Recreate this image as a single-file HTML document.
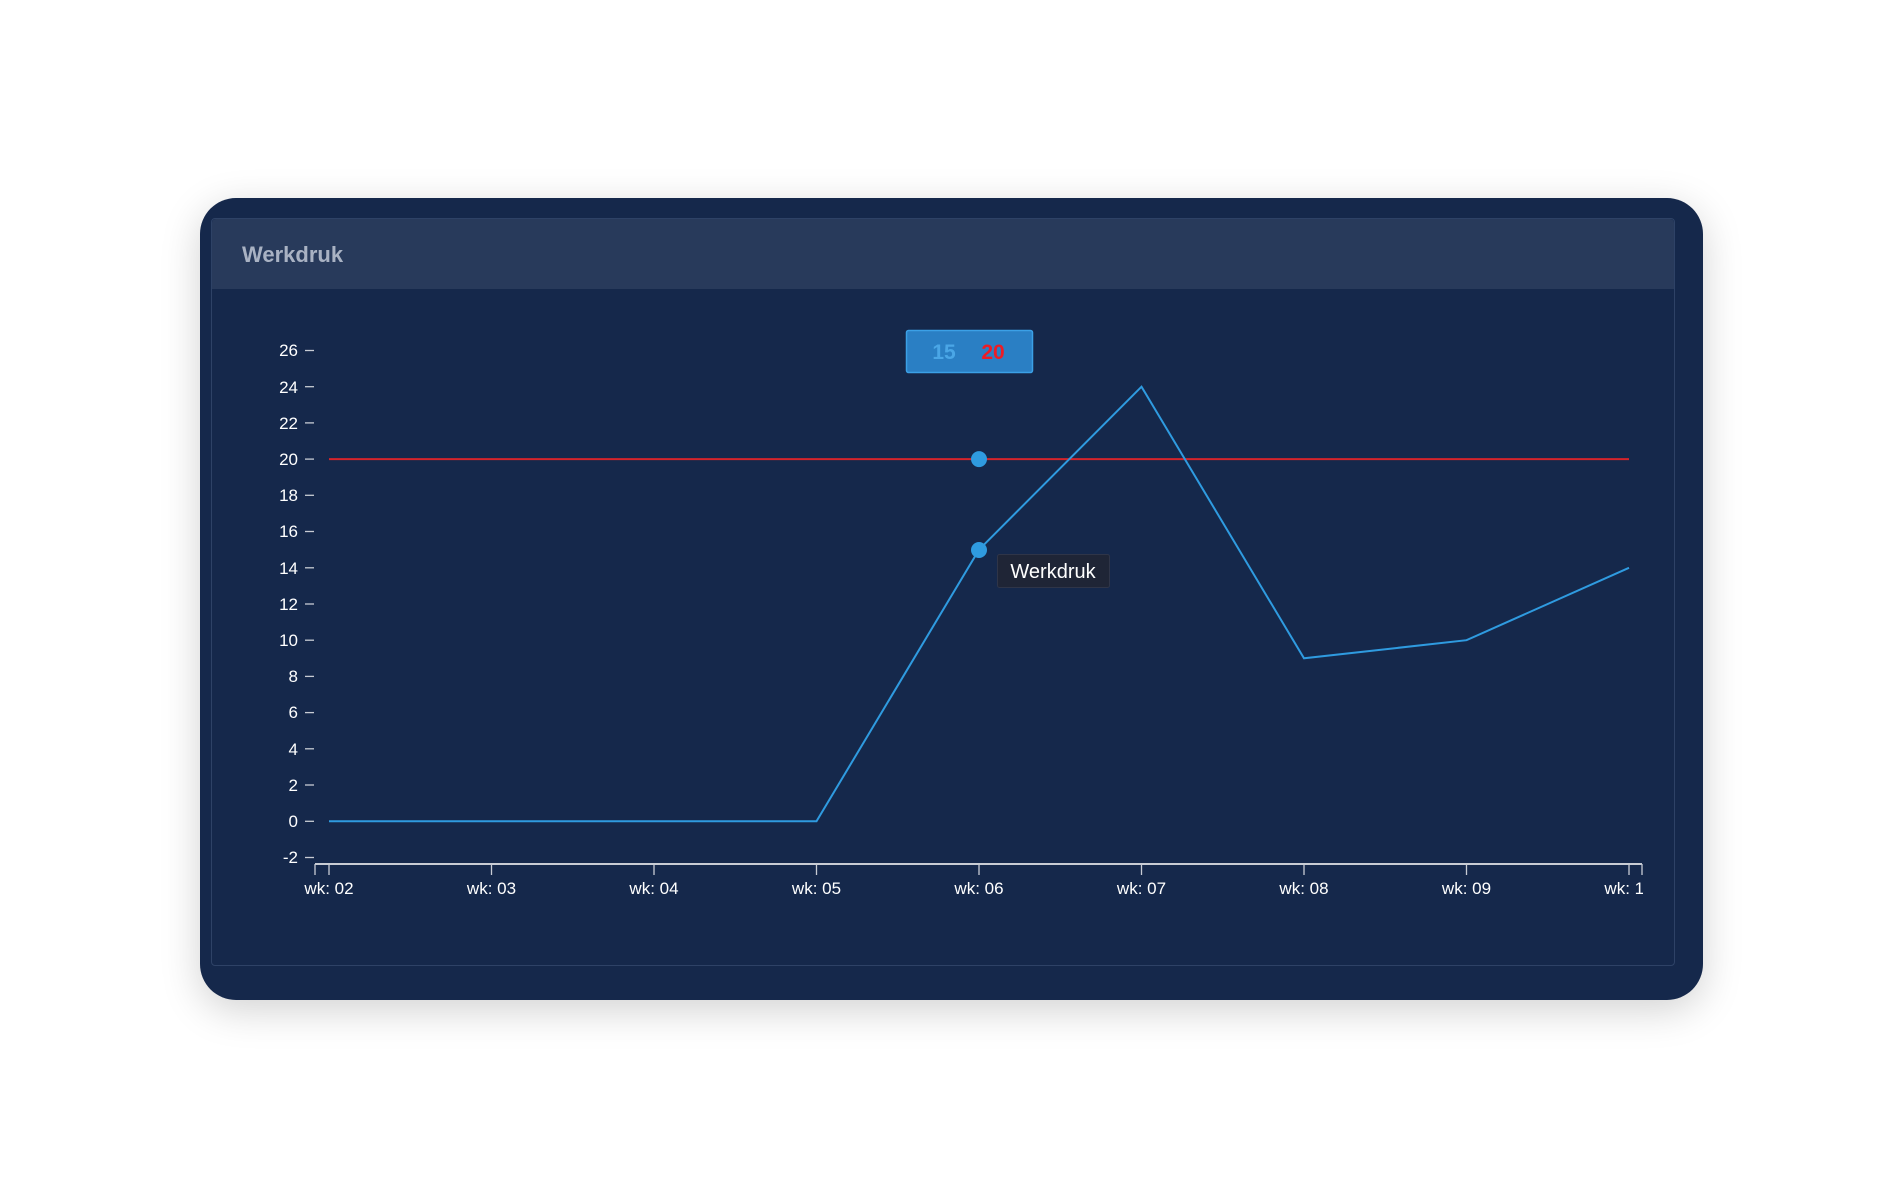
<!DOCTYPE html>
<html><head><meta charset="utf-8"><style>
html,body{margin:0;padding:0;background:#fff;width:1900px;height:1200px;overflow:hidden;font-family:"Liberation Sans",sans-serif}
.card{position:absolute;left:200px;top:198px;width:1503px;height:802px;background:#15284b;border-radius:36px;box-shadow:0 10px 40px rgba(0,0,0,0.18)}
.panel{position:absolute;left:211px;top:218px;width:1462px;height:746px;border:1px solid #2e4266;border-radius:4px}
.head{position:absolute;left:212px;top:219px;width:1462px;height:70px;background:#283a5b;border-radius:4px 4px 0 0}
.title{position:absolute;left:242px;top:242px;font-size:22px;color:#a9b2c3;font-weight:bold}
svg{position:absolute;left:0;top:0}
</style></head><body>
<div class="card"></div>
<div class="panel"></div>
<div class="head"></div>
<div class="title">Werkdruk</div>
<svg width="1900" height="1200" font-family="Liberation Sans, sans-serif">
<defs><clipPath id="c"><rect x="0" y="0" width="1643" height="1200"/></clipPath></defs>
<g fill="#fff" font-size="17" text-anchor="end">
<text x="298" y="356">26</text><text x="298" y="393">24</text><text x="298" y="429">22</text><text x="298" y="465">20</text><text x="298" y="501">18</text><text x="298" y="537">16</text><text x="298" y="574">14</text><text x="298" y="610">12</text><text x="298" y="646">10</text><text x="298" y="682">8</text><text x="298" y="718">6</text><text x="298" y="755">4</text><text x="298" y="791">2</text><text x="298" y="827">0</text><text x="298" y="863">-2</text>
</g>
<g stroke="#c8ccd4" stroke-width="1.3">
<line x1="305" y1="350.5" x2="314" y2="350.5"/><line x1="305" y1="386.7" x2="314" y2="386.7"/><line x1="305" y1="422.9" x2="314" y2="422.9"/><line x1="305" y1="459.1" x2="314" y2="459.1"/><line x1="305" y1="495.3" x2="314" y2="495.3"/><line x1="305" y1="531.5" x2="314" y2="531.5"/><line x1="305" y1="567.8" x2="314" y2="567.8"/><line x1="305" y1="604" x2="314" y2="604"/><line x1="305" y1="640.2" x2="314" y2="640.2"/><line x1="305" y1="676.4" x2="314" y2="676.4"/><line x1="305" y1="712.6" x2="314" y2="712.6"/><line x1="305" y1="748.8" x2="314" y2="748.8"/><line x1="305" y1="785" x2="314" y2="785"/><line x1="305" y1="821.3" x2="314" y2="821.3"/><line x1="305" y1="857.5" x2="314" y2="857.5"/>
<line x1="315" y1="864" x2="1642" y2="864" stroke-width="2"/>
<line x1="315" y1="864" x2="315" y2="875"/><line x1="1642" y1="864" x2="1642" y2="875"/>
<line x1="329" y1="864" x2="329" y2="875"/><line x1="491.5" y1="864" x2="491.5" y2="875"/><line x1="654" y1="864" x2="654" y2="875"/><line x1="816.5" y1="864" x2="816.5" y2="875"/><line x1="979" y1="864" x2="979" y2="875"/><line x1="1141.5" y1="864" x2="1141.5" y2="875"/><line x1="1304" y1="864" x2="1304" y2="875"/><line x1="1466.5" y1="864" x2="1466.5" y2="875"/><line x1="1629" y1="864" x2="1629" y2="875"/>
</g>
<g fill="#fff" font-size="17" text-anchor="middle" clip-path="url(#c)">
<text x="329" y="894">wk: 02</text><text x="491.5" y="894">wk: 03</text><text x="654" y="894">wk: 04</text><text x="816.5" y="894">wk: 05</text><text x="979" y="894">wk: 06</text><text x="1141.5" y="894">wk: 07</text><text x="1304" y="894">wk: 08</text><text x="1466.5" y="894">wk: 09</text><text x="1629" y="894">wk: 10</text>
</g>
<line x1="329" y1="459.1" x2="1629" y2="459.1" stroke="#d5242b" stroke-width="2"/>
<polyline points="329,821.3 491.5,821.3 654,821.3 816.5,821.3 979,549.7 1141.5,386.7 1304,658.3 1466.5,640.2 1629,567.8" fill="none" stroke="#2f9be0" stroke-width="2"/>
<circle cx="979" cy="459.1" r="8" fill="#2f9be0"/>
<circle cx="979" cy="550" r="8" fill="#2f9be0"/>
<rect x="906.5" y="330.5" width="126" height="42" rx="2" fill="#2a7fc4" stroke="#3ba0e6" stroke-width="1.5"/>
<text x="944" y="359" font-size="21" font-weight="bold" fill="#4aa6e6" text-anchor="middle">15</text>
<text x="993" y="359" font-size="21" font-weight="bold" fill="#ee1c25" text-anchor="middle">20</text>
<rect x="997.5" y="554.5" width="112" height="33" rx="2" fill="#1f2536" stroke="#2f3548"/>
<text x="1053" y="578" font-size="20" fill="#fff" text-anchor="middle">Werkdruk</text>
</svg>
</body></html>
